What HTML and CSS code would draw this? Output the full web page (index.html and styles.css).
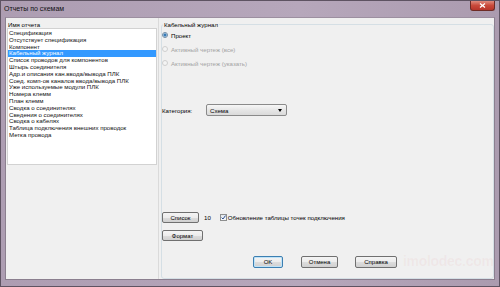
FILE: index.html
```html
<!DOCTYPE html>
<html lang="ru">
<head>
  <meta charset="UTF-8" />
  <title>Отчеты по схемам</title>
  <link rel="stylesheet" href="styles.css">
</head>
<body>
  <div class="window">
    <div class="titlebar">
      <span class="title">Отчеты по схемам</span>
      <span class="close">
        <svg width="7" height="5" viewBox="0 0 7 5"><path d="M1 0.5 L6 4.5 M6 0.5 L1 4.5" stroke="#fff" stroke-width="1.3"/></svg>
      </span>
    </div>

    <div class="client">
      <div class="left">
        <div class="list-label">Имя отчета</div>
        <ul class="list">
          <li>Спецификация</li>
          <li>Отсутствует спецификация</li>
          <li>Компонент</li>
          <li class="selected">Кабельный журнал</li>
          <li>Список проводов для компонентов</li>
          <li>Штырь соединителя</li>
          <li>Адр.и описания кан.ввода/вывода ПЛК</li>
          <li>Соед. комп-ов каналов ввода/вывода ПЛК</li>
          <li>Уже используемые модули ПЛК</li>
          <li>Номера клемм</li>
          <li>План клемм</li>
          <li>Сводка о соединителях</li>
          <li>Сведения о соединителях</li>
          <li>Сводка о кабелях</li>
          <li>Таблица подключения внешних проводок</li>
          <li>Метка провода</li>
        </ul>
      </div>

      <div class="group">
        <span class="group-title">Кабельный журнал</span>

        <div class="radios">
          <div class="radio"><span class="dot checked"></span>Проект</div>
          <div class="radio disabled"><span class="dot"></span>Активный чертеж (все)</div>
          <div class="radio disabled"><span class="dot"></span>Активный чертеж (указать)</div>
        </div>

        <div class="category">
          <span class="category-label">Категория:</span>
          <div class="select">
            <span>Схема</span>
            <span class="arrow"></span>
          </div>
        </div>

        <div class="list-row">
          <div class="btn btn-list">Список</div>
          <span class="count">10</span>
          <span class="checkbox">
            <svg width="5" height="5" viewBox="0 0 5 5"><path d="M0.6 2.6 L2 4 L4.5 0.6" stroke="#2b4f8f" stroke-width="1" fill="none"/></svg>
          </span>
          <span class="check-label">Обновление таблицы точек подключения</span>
        </div>

        <div class="format-row">
          <div class="btn btn-format">Формат</div>
        </div>

        <div class="dialog-buttons">
          <div class="btn btn-ok">OK</div>
          <div class="btn btn-cancel">Отмена</div>
          <div class="btn btn-help">Справка</div>
        </div>
      </div>
    </div>

    <div class="watermark">imolodec.com</div>
  </div>
</body>
</html>
```

FILE: styles.css
```css
html, body {
  margin: 0;
  padding: 0;
  background: #fff;
}

body {
  font-family: "Liberation Sans", Arial, sans-serif;
  font-size: 6.1px;
  color: #000;
}

.window {
  position: relative;
  width: 500px;
  height: 287px;
  box-sizing: border-box;
  border: 1px solid #5e5362;
  padding: 0 5px 6px 5px;
  background: linear-gradient(90deg, #ad9db2 0%, #b6a7bb 60%, #ab9baf 100%);
  display: flex;
  flex-direction: column;
}

.titlebar {
  height: 16px;
  display: flex;
  justify-content: space-between;
  align-items: flex-start;
}

.title {
  font-size: 7px;
  margin: 4px 0 0 -2px;
  color: #111;
}

.close {
  width: 25px;
  height: 10px;
  margin-right: -1px;
  box-sizing: border-box;
  border: 1px solid #6e2b25;
  border-top: none;
  border-radius: 0 0 3px 3px;
  background: linear-gradient(#e08a7d, #c9493a 50%, #b8352a);
  display: flex;
  align-items: center;
  justify-content: center;
}

.client {
  flex: 1;
  display: flex;
  background: #f0f0f0;
  border: 1px solid #8b7f8f;
  border-top-color: #9c8fa0;
  margin: 0 -1px 0 -1px;
}

/* left list */
.left {
  width: 153px;
  box-sizing: border-box;
  padding-left: 1px;
  border-right: 1px solid #dadada;
}

.list-label {
  padding-top: 4px;
  height: 6px;
  line-height: 6px;
  padding-left: 1px;
}

.list {
  margin: 0;
  padding: 1px 0 0;
  list-style: none;
  width: 150px;
  height: 137px;
  box-sizing: border-box;
  background: #fff;
  border: 1px solid #d2d2d2;
}

.list li {
  height: 6.8px;
  line-height: 6.8px;
  padding-left: 1px;
  white-space: nowrap;
  color: #111;
}

.list li.selected {
  background: #3399ff;
  color: #fff;
}

/* right group */
.group {
  position: relative;
  flex: 1;
  margin: 6px 0 0 2px;
  border: 1px solid #d5dfe5;
  border-radius: 3px;
  display: flex;
  flex-direction: column;
}

.group-title {
  position: absolute;
  top: -4px;
  left: 1px;
  padding: 0 1px;
  line-height: 7px;
  background: #f0f0f0;
}

.radios {
  padding-top: 3px;
}

.radio {
  display: flex;
  align-items: center;
  height: 14px;
}

.radio.disabled {
  color: #a3a3a3;
}

.dot {
  width: 6px;
  height: 6px;
  box-sizing: border-box;
  border-radius: 50%;
  border: 1px solid #8f8f8f;
  background: linear-gradient(#e9e9e9, #fafafa);
  margin: 0 3px 0 0;
}

.radio.disabled .dot {
  border-color: #cfcfcf;
  background: #f4f4f4;
}

.dot.checked {
  background: radial-gradient(circle, #2e6da4 0, #3f87c6 1.4px, #e6eef6 1.8px);
  border-color: #6f8aa3;
}

.category {
  display: flex;
  align-items: center;
  margin-top: 34px;
  height: 12px;
}

.category-label {
  width: 44px;
}

.select {
  width: 81px;
  height: 12px;
  box-sizing: border-box;
  border: 1px solid #8a8a8a;
  border-radius: 2px;
  background: linear-gradient(#f7f7f7, #e6e6e6 50%, #dadada);
  display: flex;
  align-items: center;
  justify-content: space-between;
  padding: 0 4px 0 3px;
}

.arrow {
  width: 0;
  height: 0;
  border-top: 3px solid #000;
  border-left: 2.5px solid transparent;
  border-right: 2.5px solid transparent;
}

.btn {
  position: relative;
  z-index: 1;
  height: 11px;
  box-sizing: border-box;
  border: 1px solid #707070;
  border-radius: 2px;
  background: linear-gradient(#f4f4f4 0%, #ececec 50%, #dddddd 51%, #d0d0d0 100%);
  display: flex;
  align-items: center;
  justify-content: center;
  font-size: 6px;
}

.list-row {
  display: flex;
  align-items: center;
  margin-top: 96px;
}

.btn-list {
  width: 37px;
}

.count {
  margin-left: 5px;
}

.checkbox {
  width: 7px;
  height: 7px;
  box-sizing: border-box;
  margin-left: 9px;
  border: 1px solid #8e8f8f;
  background: linear-gradient(#e4e9ef, #f8f9fb);
  display: flex;
  align-items: center;
  justify-content: center;
}

.check-label {
  margin-left: 1px;
}

.format-row {
  display: flex;
  margin-top: 7px;
}

.btn-format {
  width: 41px;
}

.dialog-buttons {
  display: flex;
  margin-top: 15px;
  padding-left: 91px;
}

.btn-ok {
  width: 30px;
  height: 12px;
  border-color: #3c7fb1;
  box-shadow: inset 0 0 0 1px #bfe3f8;
}

.btn-cancel {
  width: 37px;
  margin-left: 18px;
  height: 12px;
}

.btn-help {
  width: 42px;
  margin-left: 17px;
  height: 12px;
}

/* faint watermark in the corner */
.watermark {
  position: absolute;
  z-index: 0;
  left: 402px;
  top: 252px;
  font-family: "Liberation Sans", Arial, sans-serif;
  font-weight: bold;
  font-size: 14px;
  letter-spacing: -0.3px;
  color: rgba(225, 140, 140, 0.09);
  pointer-events: none;
}
```
